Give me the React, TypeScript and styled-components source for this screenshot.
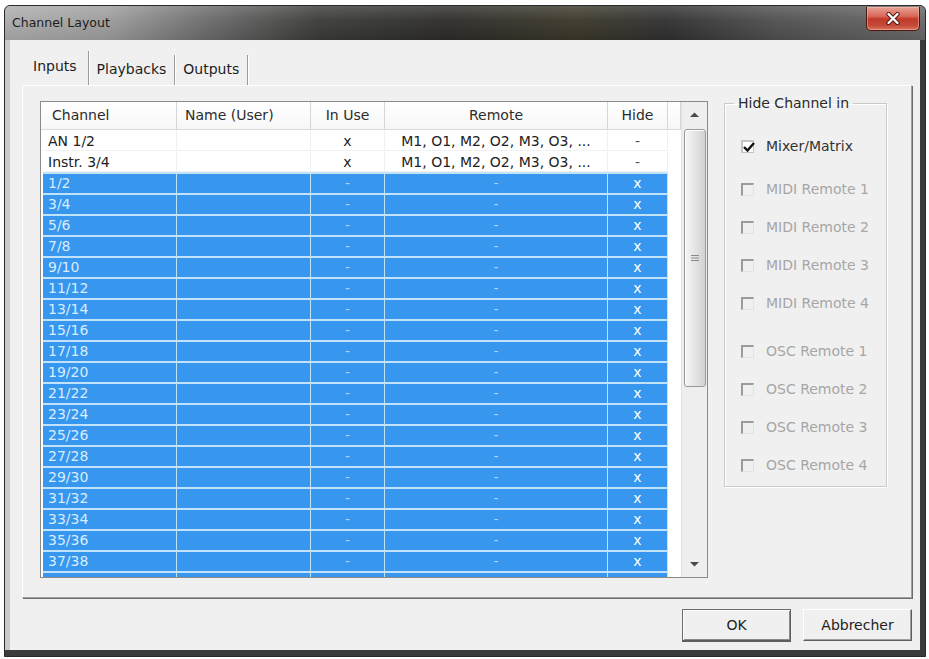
import React from 'react';
import styled, { createGlobalStyle } from 'styled-components';

const Global = createGlobalStyle`
  html, body { margin: 0; padding: 0; background: #ffffff; }
  body { font-family: "DejaVu Sans", "Liberation Sans", sans-serif; }
  #root { width: 929px; height: 659px; }
  * { box-sizing: border-box; }
`;

const Page = styled.div`
  width: 929px;
  height: 659px;
  padding: 5px 3px 2px 4px;
  background: #ffffff;
`;

const Window = styled.div`
  height: 100%;
  display: flex;
  flex-direction: column;
  border: 1px solid #2b2b2b;
  border-radius: 6px 6px 0 0;
  background: #3b3b3b;
  overflow: hidden;
`;

const TitleBar = styled.div`
  height: 34px;
  flex: none;
  display: flex;
  align-items: flex-start;
  justify-content: space-between;
  padding: 0 5px 0 7px;
  background:
    linear-gradient(180deg, rgba(255,255,255,0.18) 0%, rgba(255,255,255,0.05) 40%, rgba(0,0,0,0.08) 100%),
    linear-gradient(90deg, #ababab 0%, #9c9c9c 11%, #6a6a6a 22%, #3a3a38 34%, #2c2b28 48%, #3a3628 62%, #2f2f2f 72%, #4f4f4f 84%, #676767 100%);
`;

const TitleText = styled.div`
  font-size: 12.5px;
  line-height: 34px;
  color: #1c1c1c;
`;

const CloseButton = styled.div`
  margin-top: 1px;
  width: 54px;
  height: 24px;
  border: 1px solid #4a1810;
  border-top: none;
  border-radius: 0 0 5px 5px;
  background: linear-gradient(180deg, #e6a294 0%, #d9685a 40%, #c23a2a 52%, #c54a38 80%, #d8735e 100%);
  box-shadow: inset 0 0 0 1px rgba(255, 200, 190, 0.45);
  display: flex;
  align-items: center;
  justify-content: center;
`;

const FrameBody = styled.div`
  flex: 1;
  display: flex;
  padding: 0 5px 6px 5px;
  background: #3c3c3c;
`;

const Client = styled.div`
  flex: 1;
  display: flex;
  flex-direction: column;
  background: #f0f0f0;
  box-shadow: -5px 0 0 #c9c9c9;
  padding: 12px 8px 0 12px;
`;

const TabStrip = styled.div`
  height: 33px;
  display: flex;
  align-items: flex-end;
`;

const Tab = styled.div<{ $active?: boolean }>`
  height: ${(p) => (p.$active ? 34 : 30)}px;
  padding: 0 ${(p) => (p.$active ? 11 : 8)}px ${(p) => (p.$active ? 5 : 2)}px;
  display: flex;
  align-items: center;
  font-size: 14px;
  color: #1e1e1e;
  border-right: 1px solid #9a9a9a;
  box-shadow: 1px 0 0 #ffffff;
`;

const Panel = styled.div`
  height: 513px;
  display: flex;
  align-items: flex-start;
  gap: 16px;
  padding: 15px 0 0 17px;
  border-top: 1px solid #ffffff;
  border-left: 1px solid #ffffff;
  border-right: 1px solid #a0a0a0;
  border-bottom: 1px solid #a0a0a0;
  box-shadow: 1px 1px 0 #6c6c6c;
`;

const List = styled.div`
  width: 668px;
  height: 477px;
  flex: none;
  display: flex;
  border: 1px solid #8a8a8a;
  background: #ffffff;
`;

const ListBody = styled.div`
  width: 640px;
  display: flex;
  flex-direction: column;
`;

const GRID = '134px 134px 74px 223px 60px 13px';

const HeaderRow = styled.div`
  height: 28px;
  flex: none;
  display: grid;
  grid-template-columns: ${GRID};
  padding-left: 2px;
  background: linear-gradient(180deg, #ffffff 0%, #f7f7f7 100%);
  border-bottom: 1px solid #dadada;
`;

const HeaderCell = styled.div<{ $align: string; $pad: number }>`
  border-right: 1px solid #d6d6d6;
  font-size: 14px;
  line-height: 27px;
  color: #2c2c2c;
  text-align: ${(p) => p.$align};
  padding-left: ${(p) => p.$pad}px;
  white-space: nowrap;
  overflow: hidden;
`;

const Rows = styled.div`
  flex: 1;
  overflow: hidden;
  padding-left: 2px;
`;

const Row = styled.div`
  height: 21px;
  display: grid;
  grid-template-columns: ${GRID};
`;

const Cell = styled.div<{ $sel: boolean; $align: string; $pad: number; $tone: string }>`
  height: 21px;
  background: ${(p) => (p.$sel ? '#3796ee' : 'transparent')};
  border-top: 2px solid ${(p) => (p.$sel ? '#c0e3fa' : 'transparent')};
  border-right: 1px solid ${(p) => (p.$sel ? '#c0e3fa' : '#efefef')};
  border-bottom: ${(p) => (p.$sel ? 'none' : '1px solid #f1f1f1')};
  font-size: 14px;
  line-height: 18px;
  color: ${(p) => p.$tone};
  text-align: ${(p) => p.$align};
  padding-left: ${(p) => p.$pad}px;
  white-space: nowrap;
  overflow: hidden;
`;

const Filler = styled.div``;

const Scrollbar = styled.div`
  width: 26px;
  flex: none;
  display: flex;
  flex-direction: column;
  background: #eeeeee;
  border-left: 1px solid #e2e2e2;
`;

const ArrowButton = styled.div`
  height: 26px;
  flex: none;
  display: flex;
  align-items: center;
  justify-content: center;
`;

const Track = styled.div`
  flex: 1;
  padding: 1px 1px 0 2px;
`;

const Thumb = styled.div`
  height: 258px;
  border: 1px solid #9a9a9a;
  border-radius: 3px;
  background: linear-gradient(90deg, #f6f6f6 0%, #e6e6e6 45%, #d2d2d2 100%);
  box-shadow: inset 1px 1px 0 #ffffff;
  display: flex;
  align-items: center;
  justify-content: center;
`;

const Group = styled.fieldset`
  width: 163px;
  margin: -6px 0 0 0;
  padding: 16px 0 2px 16px;
  border: 1px solid #cacaca;
  box-shadow: inset 1px 1px 0 #ffffff, 1px 1px 0 #ffffff;
  min-width: 0;
`;

const Legend = styled.legend`
  margin-left: -7px;
  padding: 0 4px;
  font-size: 14px;
  line-height: 16px;
  color: #2a2a2a;
`;

const CheckItem = styled.div<{ $gapAfter: number }>`
  height: 38px;
  margin-bottom: ${(p) => p.$gapAfter}px;
  display: flex;
  align-items: center;
  gap: 12px;
`;

const Box = styled.div<{ $disabled?: boolean }>`
  width: 13px;
  height: 13px;
  flex: none;
  border-top: 2px solid ${(p) => (p.$disabled ? '#9c9c9c' : '#c4c4c4')};
  border-left: 2px solid ${(p) => (p.$disabled ? '#9c9c9c' : '#c4c4c4')};
  border-right: 1px solid ${(p) => (p.$disabled ? '#e2e2e2' : '#c4c4c4')};
  border-bottom: 1px solid ${(p) => (p.$disabled ? '#e2e2e2' : '#c4c4c4')};
  background: ${(p) => (p.$disabled ? '#f0f0f0' : '#ffffff')};
  position: relative;
`;

const CheckMark = styled.svg`
  position: absolute;
  left: -2px;
  top: -3px;
`;

const CheckLabel = styled.span<{ $disabled?: boolean }>`
  font-size: 14px;
  color: ${(p) => (p.$disabled ? '#a6a6a6' : '#333333')};
  white-space: nowrap;
`;

const ButtonRow = styled.div`
  margin-top: 11px;
  display: flex;
  justify-content: flex-end;
  gap: 12px;
`;

const DialogButton = styled.div<{ $default?: boolean }>`
  width: 109px;
  height: 32px;
  display: flex;
  align-items: center;
  justify-content: center;
  font-size: 14px;
  color: #222222;
  background: #f0f0f0;
  border-top: 1px solid ${(p) => (p.$default ? '#6a6a6a' : '#ffffff')};
  border-left: 1px solid ${(p) => (p.$default ? '#6a6a6a' : '#ffffff')};
  border-right: 1px solid #5e5e5e;
  border-bottom: 1px solid #5e5e5e;
  box-shadow: ${(p) =>
    p.$default
      ? 'inset 1px 1px 0 #ffffff, inset -1px -1px 0 #8a8a8a, 0 1px 0 #5e5e5e'
      : 'inset -1px -1px 0 #a0a0a0'};
`;

type Col = { key: string; label: string; align: string; hpad: number; pad: number };

const columns: Col[] = [
  { key: 'channel', label: 'Channel', align: 'left', hpad: 9, pad: 5 },
  { key: 'name', label: 'Name (User)', align: 'left', hpad: 8, pad: 5 },
  { key: 'inUse', label: 'In Use', align: 'center', hpad: 0, pad: 0 },
  { key: 'remote', label: 'Remote', align: 'center', hpad: 0, pad: 0 },
  { key: 'hide', label: 'Hide', align: 'center', hpad: 0, pad: 0 },
];

type RowData = { channel: string; name: string; inUse: string; remote: string; hide: string; sel: boolean };

const rows: RowData[] = [
  { channel: 'AN 1/2', name: '', inUse: 'x', remote: 'M1, O1, M2, O2, M3, O3, ...', hide: '-', sel: false },
  { channel: 'Instr. 3/4', name: '', inUse: 'x', remote: 'M1, O1, M2, O2, M3, O3, ...', hide: '-', sel: false },
  ...Array.from({ length: 20 }, (_, i) => ({
    channel: `${2 * i + 1}/${2 * i + 2}`,
    name: '',
    inUse: '-',
    remote: '-',
    hide: 'x',
    sel: true,
  })),
];

const toneFor = (key: string, r: RowData) => {
  if (!r.sel) return key === 'hide' ? '#555555' : '#222222';
  if (key === 'channel') return '#d9edff';
  if (key === 'hide') return '#ffffff';
  return '#a9d5fb';
};

const checks = [
  { label: 'Mixer/Matrix', checked: true, disabled: false, gap: 5 },
  { label: 'MIDI Remote 1', checked: false, disabled: true, gap: 0 },
  { label: 'MIDI Remote 2', checked: false, disabled: true, gap: 0 },
  { label: 'MIDI Remote 3', checked: false, disabled: true, gap: 0 },
  { label: 'MIDI Remote 4', checked: false, disabled: true, gap: 10 },
  { label: 'OSC Remote 1', checked: false, disabled: true, gap: 0 },
  { label: 'OSC Remote 2', checked: false, disabled: true, gap: 0 },
  { label: 'OSC Remote 3', checked: false, disabled: true, gap: 0 },
  { label: 'OSC Remote 4', checked: false, disabled: true, gap: 0 },
];

const Arrow = ({ up }: { up: boolean }) => (
  <svg width="9" height="6" viewBox="0 0 9 6">
    <polygon points={up ? '0,5 4.5,0.5 9,5' : '0,1 4.5,5.5 9,1'} fill="#4a4a4a" />
  </svg>
);

export default function App() {
  return (
    <>
      <Global />
      <Page>
        <Window>
          <TitleBar>
            <TitleText>Channel Layout</TitleText>
            <CloseButton>
              <svg width="14" height="13" viewBox="0 0 14 13">
                <path d="M2.5 2 L11.5 11 M11.5 2 L2.5 11" stroke="#4a1410" strokeWidth="4.2" strokeLinecap="round" />
                <path d="M2.5 2 L11.5 11 M11.5 2 L2.5 11" stroke="#ffffff" strokeWidth="2.4" strokeLinecap="round" />
              </svg>
            </CloseButton>
          </TitleBar>
          <FrameBody>
            <Client>
              <TabStrip>
                <Tab $active>Inputs</Tab>
                <Tab>Playbacks</Tab>
                <Tab>Outputs</Tab>
              </TabStrip>
              <Panel>
                <List>
                  <ListBody>
                    <HeaderRow>
                      {columns.map((c) => (
                        <HeaderCell key={c.key} $align={c.align} $pad={c.hpad}>
                          {c.label}
                        </HeaderCell>
                      ))}
                      <HeaderCell $align="left" $pad={0} />
                    </HeaderRow>
                    <Rows>
                      {rows.map((r, i) => (
                        <Row key={i}>
                          {columns.map((c) => (
                            <Cell
                              key={c.key}
                              $sel={r.sel}
                              $align={c.align}
                              $pad={c.pad}
                              $tone={toneFor(c.key, r)}
                            >
                              {(r as any)[c.key]}
                            </Cell>
                          ))}
                          <Filler />
                        </Row>
                      ))}
                    </Rows>
                  </ListBody>
                  <Scrollbar>
                    <ArrowButton>
                      <Arrow up />
                    </ArrowButton>
                    <Track>
                      <Thumb>
                        <svg width="8" height="8" viewBox="0 0 8 8">
                          <path d="M0 1.5 H8 M0 4 H8 M0 6.5 H8" stroke="#8a8a8a" strokeWidth="1" />
                        </svg>
                      </Thumb>
                    </Track>
                    <ArrowButton>
                      <Arrow up={false} />
                    </ArrowButton>
                  </Scrollbar>
                </List>
                <Group>
                  <Legend>Hide Channel in</Legend>
                  {checks.map((c) => (
                    <CheckItem key={c.label} $gapAfter={c.gap}>
                      <Box $disabled={c.disabled}>
                        {c.checked && (
                          <CheckMark width="16" height="16" viewBox="0 0 16 16">
                            <path d="M3 8 L6.5 11.5 L13 4" stroke="#111111" strokeWidth="2.4" fill="none" />
                          </CheckMark>
                        )}
                      </Box>
                      <CheckLabel $disabled={c.disabled}>{c.label}</CheckLabel>
                    </CheckItem>
                  ))}
                </Group>
              </Panel>
              <ButtonRow>
                <DialogButton $default>OK</DialogButton>
                <DialogButton>Abbrecher</DialogButton>
              </ButtonRow>
            </Client>
          </FrameBody>
        </Window>
      </Page>
    </>
  );
}
